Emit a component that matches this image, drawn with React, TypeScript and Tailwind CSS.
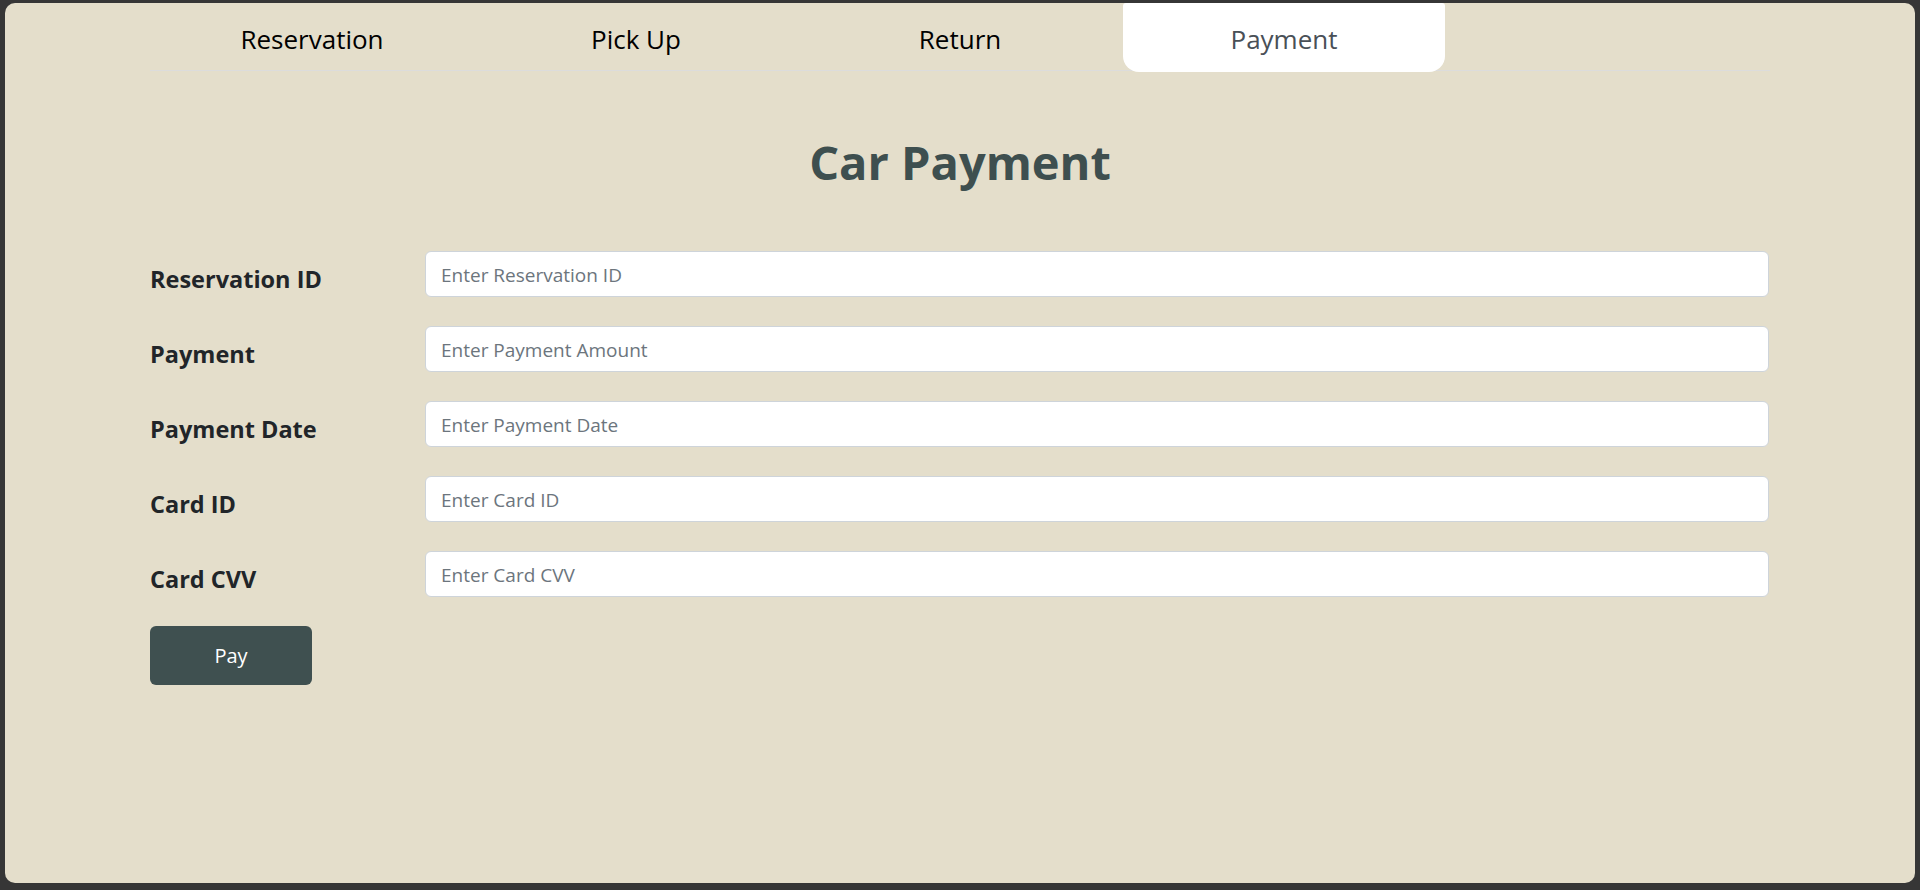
import React from 'react';

const tabs = ['Reservation', 'Pick Up', 'Return', 'Payment'];

const fields = [
  { label: 'Reservation ID', placeholder: 'Enter Reservation ID' },
  { label: 'Payment', placeholder: 'Enter Payment Amount' },
  { label: 'Payment Date', placeholder: 'Enter Payment Date' },
  { label: 'Card ID', placeholder: 'Enter Card ID' },
  { label: 'Card CVV', placeholder: 'Enter Card CVV' },
];

const App: React.FC = () => {
  const active = 'Payment';
  return (
    <div
      className="h-[890px] w-full bg-[#363636] pb-[7px] pl-[5px] pr-[5px] pt-[3px]"
      style={{ fontFamily: '"Open Sans", "Noto Sans", sans-serif' }}
    >
      <main className="h-full rounded-[10px] bg-[#e4decb]">
        <nav className="ml-[145px] flex h-[68px] w-[1620px] gap-[2px] border-b border-[#dcdcdc] pl-px">
          {tabs.map((tab) => (
            <div
              key={tab}
              className={
                tab === active
                  ? 'relative -mb-px flex h-[69px] w-[322px] items-center justify-center rounded-b-[16px] rounded-t-[3px] bg-white pt-[4px] text-[26px] text-[#495057]'
                  : 'flex h-[68px] w-[322px] items-center justify-center pt-[4px] text-[26px] text-black'
              }
            >
              {tab}
            </div>
          ))}
        </nav>

        <h1 className="mt-[59px] text-center text-[47px] font-bold leading-[64px] text-[#3e4f4f]">
          Car Payment
        </h1>

        <form className="ml-[145px] mt-[57px] flex w-[1620px] flex-col gap-[29px]">
          {fields.map((f) => (
            <div key={f.label} className="flex items-start">
              <label className="mt-[13px] w-[275px] text-[23.5px] font-bold leading-[30px] text-[#212529]">
                {f.label}
              </label>
              <input
                type="text"
                placeholder={f.placeholder}
                className="h-[46px] w-[1344px] rounded-[6px] border border-[#ced4da] bg-white pl-[15px] pr-4 pt-[2px] text-[19px] text-[#212529] outline-none placeholder:text-[#6c757d]"
              />
            </div>
          ))}
          <div>
            <button
              type="button"
              className="h-[59px] w-[162px] rounded-[6px] bg-[#3f5050] text-[20px] text-white"
            >
              Pay
            </button>
          </div>
        </form>
      </main>
    </div>
  );
};

export default App;
